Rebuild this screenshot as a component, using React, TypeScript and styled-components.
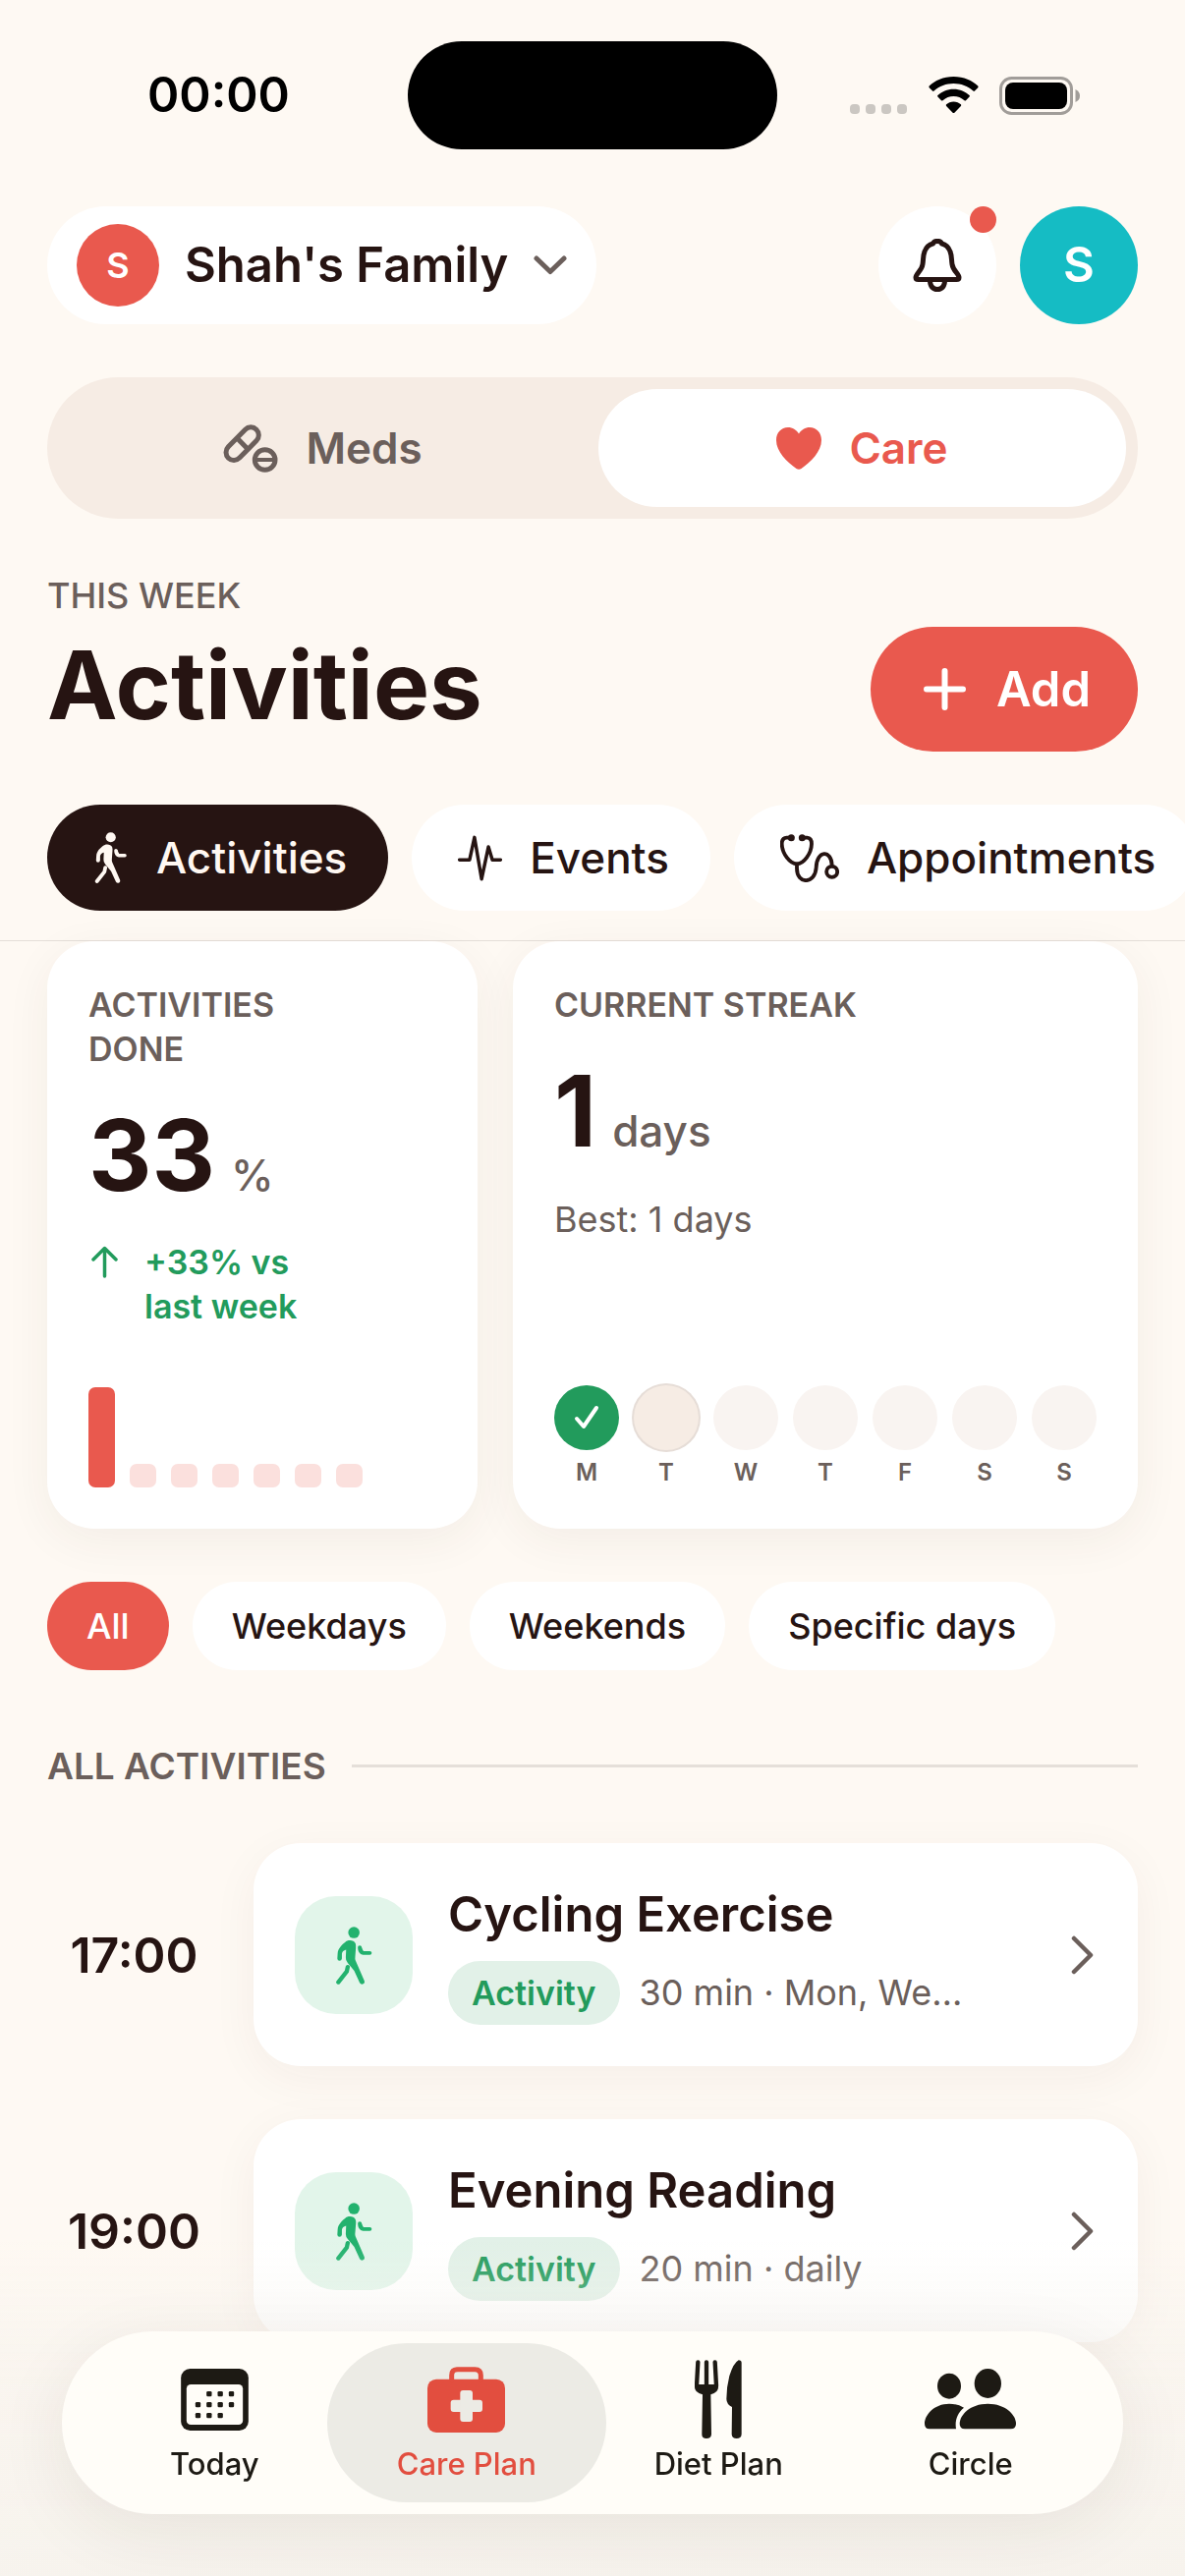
import React from "react";
import styled, { createGlobalStyle } from "styled-components";

const color = {
  page: "#fef9f3",
  ink: "#261412",
  muted: "#6b5f5b",
  coral: "#e9594e",
  teal: "#15bcc4",
  sand: "#f6ece4",
  green: "#229b5c",
  leaf: "#22b26e",
  line: "#e5dfd9",
  navInk: "#1d1a14",
  navRed: "#e24e3f",
  navActive: "#ecebe5",
};

const GlobalStyle = createGlobalStyle`
  * { box-sizing: border-box; }
  body {
    margin: 0;
    background: ${color.page};
    color: ${color.ink};
    font-family: Inter, "Liberation Sans", sans-serif;
  }
  button {
    font: inherit;
    color: inherit;
    border: 0;
    margin: 0;
    padding: 0;
    background: none;
    cursor: pointer;
  }
  h1, h2, h3, p, ul { margin: 0; padding: 0; }
  ul { list-style: none; }
  svg { display: block; flex: none; }
`;

const Screen = styled.div`
  min-height: 100vh;
  padding-bottom: 236px;
  overflow: hidden;
`;

/* ---------- status bar ---------- */

const StatusBar = styled.div`
  display: grid;
  grid-template-columns: 1fr 376px 1fr;
  align-items: center;
  padding-top: 42px;
`;

const Clock = styled.span`
  padding-left: 150px;
  font-size: 49px;
  line-height: 60px;
  font-weight: 600;
  color: #000;
`;

const Island = styled.div`
  height: 110px;
  border-radius: 55px;
  background: #000;
`;

const StatusIcons = styled.div`
  display: flex;
  align-items: center;
  justify-content: flex-end;
  gap: 21px;
  padding-right: 107px;
`;

/* ---------- header ---------- */

const Header = styled.header`
  padding-top: 58px;
  border-bottom: 1px solid ${color.line};
`;

const TopRow = styled.div`
  display: flex;
  justify-content: space-between;
  align-items: center;
  padding: 0 48px;
`;

const FamilyButton = styled.button`
  display: flex;
  align-items: center;
  gap: 26px;
  height: 120px;
  padding: 0 30px;
  border-radius: 60px;
  background: #fff;
  font-size: 49px;
  line-height: 60px;
  font-weight: 600;
`;

const FamilyBadge = styled.span`
  width: 84px;
  height: 84px;
  border-radius: 50%;
  background: ${color.coral};
  color: #fff;
  font-size: 36px;
  line-height: 84px;
  text-align: center;
`;

const TopActions = styled.div`
  display: flex;
  gap: 24px;
`;

const RoundButton = styled.button<{ $bg: string }>`
  position: relative;
  display: grid;
  place-items: center;
  width: 120px;
  height: 120px;
  border-radius: 50%;
  background: ${(p) => p.$bg};
  color: ${(p) => (p.$bg === "#fff" ? color.ink : "#fff")};
  font-size: 49px;
  line-height: 60px;
  font-weight: 600;
`;

const UnreadDot = styled.span`
  position: absolute;
  top: 0;
  right: 0;
  width: 27px;
  height: 27px;
  border-radius: 50%;
  background: ${color.coral};
`;

const Segments = styled.div`
  display: grid;
  grid-template-columns: 1fr 1fr;
  gap: 12px;
  margin: 54px 48px 0;
  padding: 12px;
  border-radius: 72px;
  background: ${color.sand};
`;

const Segment = styled.button<{ $on?: boolean }>`
  display: flex;
  align-items: center;
  justify-content: center;
  gap: 28px;
  height: 120px;
  border-radius: 60px;
  background: ${(p) => (p.$on ? "#fff" : "transparent")};
  color: ${(p) => (p.$on ? color.coral : color.muted)};
  font-size: 44px;
  line-height: 60px;
  font-weight: 600;
`;

const TitleRow = styled.div`
  display: flex;
  justify-content: space-between;
  align-items: flex-end;
  padding: 56px 48px 0;
`;

const TitleBlock = styled.div`
  display: grid;
  gap: 8px;
  padding-bottom: 8px;
`;

const Eyebrow = styled.p`
  font-size: 36px;
  line-height: 45px;
  font-weight: 500;
  color: ${color.muted};
`;

const Title = styled.h1`
  font-size: 96px;
  line-height: 120px;
  font-weight: 700;
`;

const AddButton = styled.button`
  display: flex;
  align-items: center;
  gap: 31px;
  height: 127px;
  padding: 0 48px 0 54px;
  border-radius: 64px;
  background: ${color.coral};
  color: #fff;
  font-size: 49px;
  line-height: 60px;
  font-weight: 600;
`;

const Tabs = styled.nav`
  display: flex;
  gap: 24px;
  padding: 54px 48px 30px;
  overflow-x: auto;
  scrollbar-width: none;
`;

const Tab = styled.button<{ $on?: boolean }>`
  display: flex;
  flex: none;
  align-items: center;
  gap: 28px;
  height: 108px;
  padding: 0 42px 0 47px;
  border-radius: 54px;
  background: ${(p) => (p.$on ? color.ink : "#fff")};
  color: ${(p) => (p.$on ? "#fff8f2" : color.ink)};
  font-size: 44px;
  line-height: 60px;
  font-weight: 500;
`;

/* ---------- summary cards ---------- */

const Summary = styled.section`
  display: grid;
  grid-template-columns: 438fr 636fr;
  gap: 36px;
  padding: 0 48px;
`;

const Card = styled.article`
  display: flex;
  flex-direction: column;
  padding: 42px;
  border-radius: 48px;
  background: #fff;
  box-shadow: 0 12px 48px rgba(70, 45, 30, 0.06);
`;

const CardLabel = styled.h2`
  max-width: 400px;
  font-size: 34px;
  line-height: 45px;
  font-weight: 600;
  color: ${color.muted};
`;

const NarrowLabel = styled(CardLabel)`
  max-width: 250px;
`;

const Figure = styled.p`
  display: flex;
  align-items: baseline;
  gap: 16px;
  margin-top: 26px;
  font-size: 100px;
  line-height: 120px;
  font-weight: 700;
`;

const Unit = styled.span`
  font-size: 44px;
  font-weight: 500;
  line-height: 60px;
  color: ${color.muted};
`;

const Delta = styled.p`
  display: flex;
  gap: 27px;
  max-width: 250px;
  margin: 26px 0 60px;
  font-size: 34px;
  line-height: 45px;
  font-weight: 600;
  color: ${color.green};
  svg { margin: 6px 0 0 3px; }
`;

const Best = styled.p`
  margin-top: 28px;
  font-size: 36px;
  line-height: 45px;
  color: ${color.muted};
`;

const Bars = styled.div`
  display: flex;
  align-items: flex-end;
  gap: 15px;
  height: 102px;
  margin-top: auto;
`;

const Bar = styled.span<{ $full: boolean }>`
  width: 27px;
  height: ${(p) => (p.$full ? "100%" : "24px")};
  border-radius: 7px;
  background: ${(p) => (p.$full ? color.coral : "#fbe0dd")};
`;

const Week = styled.ul`
  display: flex;
  justify-content: space-between;
  margin-top: auto;
`;

const Day = styled.li`
  display: grid;
  justify-items: center;
  gap: 8px;
  width: 66px;
  font-size: 24px;
  line-height: 30px;
  font-weight: 600;
  color: ${color.muted};
`;

const DayMark = styled.span<{ $state: "done" | "today" | "next" }>`
  display: grid;
  place-items: center;
  width: 66px;
  height: 66px;
  border-radius: 50%;
  background: ${(p) =>
    p.$state === "done" ? color.green : p.$state === "today" ? color.sand : "#f9f4f1"};
  box-shadow: ${(p) => (p.$state === "today" ? "0 0 0 2px #e6ddd7" : "none")};
`;

/* ---------- filters ---------- */

const Filters = styled.div`
  display: flex;
  gap: 24px;
  padding: 54px 48px 0;
`;

const Filter = styled.button<{ $on?: boolean }>`
  height: 90px;
  padding: 0 40px;
  border-radius: 45px;
  background: ${(p) => (p.$on ? color.coral : "#fff")};
  color: ${(p) => (p.$on ? "#fff" : color.ink)};
  font-size: 36px;
  line-height: 45px;
  font-weight: 500;
`;

/* ---------- activity list ---------- */

const SectionHead = styled.div`
  display: flex;
  align-items: center;
  gap: 26px;
  padding: 75px 48px 0;
  &::after {
    content: "";
    flex: 1;
    height: 3px;
    background: ${color.line};
  }
`;

const SectionTitle = styled.h2`
  font-size: 37px;
  line-height: 45px;
  font-weight: 600;
  color: ${color.muted};
`;

const List = styled.ul`
  display: grid;
  gap: 54px;
  padding: 56px 48px 0;
`;

const Entry = styled.li`
  display: grid;
  grid-template-columns: 177px 1fr;
  gap: 33px;
  align-items: center;
`;

const Time = styled.time`
  text-align: center;
  font-size: 50px;
  line-height: 60px;
  font-weight: 600;
`;

const EntryCard = styled.button`
  display: flex;
  align-items: center;
  gap: 36px;
  min-width: 0;
  padding: 43px 42px 42px;
  border-radius: 48px;
  background: #fff;
  text-align: left;
  box-shadow: 0 12px 48px rgba(70, 45, 30, 0.05);
`;

const IconTile = styled.span`
  display: grid;
  flex: none;
  place-items: center;
  width: 120px;
  height: 120px;
  border-radius: 42px;
  background: #e2f5ea;
  color: ${color.leaf};
`;

const EntryText = styled.span`
  display: grid;
  flex: 1;
  gap: 17px;
  min-width: 0;
`;

const EntryTitle = styled.span`
  font-size: 49px;
  line-height: 60px;
  font-weight: 600;
`;

const EntryMeta = styled.span`
  display: flex;
  align-items: center;
  gap: 20px;
  font-size: 36px;
  line-height: 45px;
  color: ${color.muted};
`;

const Tag = styled.span`
  padding: 10px 24px;
  border-radius: 33px;
  background: #e2f1e8;
  color: ${color.green};
  font-size: 34px;
  line-height: 45px;
  font-weight: 600;
`;

/* ---------- bottom navigation ---------- */

const Fade = styled.div`
  position: fixed;
  inset: auto 0 0;
  height: 340px;
  pointer-events: none;
  background: linear-gradient(rgba(246, 242, 236, 0), rgba(246, 242, 236, 0.6) 40%, #f7f3ed);
`;

const BottomNav = styled.nav`
  position: fixed;
  inset: auto 63px 63px;
  display: grid;
  grid-template-columns: repeat(4, 1fr);
  padding: 12px 27px;
  border-radius: 93px;
  background: #fffdf8;
  box-shadow: 0 18px 72px rgba(50, 40, 30, 0.08);
`;

const NavItem = styled.button<{ $on?: boolean }>`
  display: flex;
  flex-direction: column;
  align-items: center;
  gap: 8px;
  height: 162px;
  margin: 0 -14px;
  padding-top: 17px;
  border-radius: 81px;
  background: ${(p) => (p.$on ? color.navActive : "transparent")};
  color: ${(p) => (p.$on ? color.navRed : color.navInk)};
  font-size: 31px;
  line-height: 36px;
  font-weight: 500;
`;

const NavIcon = styled.span`
  display: grid;
  place-items: center;
  height: 80px;
`;

/* ---------- drawings ---------- */

const line = {
  fill: "none",
  stroke: "currentColor",
  strokeLinecap: "round" as const,
  strokeLinejoin: "round" as const,
};

const SignalDots = () => (
  <svg width="59" height="39" viewBox="0 0 59 39" fill="#cbc7c2">
    {[0, 16, 32, 48].map((x) => (
      <rect key={x} x={x} y="28" width="10" height="10" rx="4" />
    ))}
  </svg>
);

const Wifi = () => (
  <svg width="51" height="38" viewBox="0 0 51 38">
    <path d="M25.500 0C36 0 44.500 4 50.300 9.600Q51 10.400 50.300 11.200L47 14.600Q46.200 15.300 45.400 14.600C40 9.700 33 7 25.500 7S11 9.700 5.600 14.600Q4.800 15.300 4 14.600L.7 11.200Q0 10.400.7 9.600C6.500 4 15 0 25.500 0Z" />
    <path d="M25.500 12.700C32 12.700 37.500 15.200 41.600 19Q42.400 19.800 41.600 20.600L38 24.200Q37.300 24.900 36.500 24.200C33.400 21.400 29.700 19.900 25.500 19.900S17.600 21.400 14.500 24.200Q13.700 24.900 13 24.200L9.400 20.600Q8.600 19.800 9.400 19C13.500 15.200 19 12.700 25.500 12.700Z" />
    <path d="M25.500 25.500C28.500 25.500 31 26.600 32.900 28.300Q33.700 29.100 32.900 29.900L26.400 36.700Q25.500 37.500 24.600 36.700L18.100 29.900Q17.300 29.100 18.100 28.300C20 26.600 22.500 25.500 25.500 25.500Z" />
  </svg>
);

const Battery = () => (
  <svg width="82" height="39" viewBox="0 0 82 39">
    <rect x="1.500" y="1.500" width="72" height="36" rx="11" fill="none" stroke="#a19d99" strokeWidth="3" />
    <rect x="6" y="6" width="63" height="27" rx="8" />
    <path d="M77.500 13Q82 15 82 19.500T77.500 26Z" fill="#a19d99" />
  </svg>
);

const ChevronDown = () => (
  <svg width="34" height="20" viewBox="0 0 34 20">
    <path d="M3 3 17 16.500 31 3" {...line} stroke={color.muted} strokeWidth="5" />
  </svg>
);

const ChevronRight = () => (
  <svg width="26" height="40" viewBox="0 0 26 40">
    <path d="M3 3 20 20 3 37" {...line} stroke={color.muted} strokeWidth="4.500" />
  </svg>
);

const Bell = () => (
  <svg width="50" height="54" viewBox="0 0 50 54">
    <g {...line} strokeWidth="5">
      <path d="M3 39.500C3 35.500 9 33 10 26C10.800 21 10.300 17 12 13C14 7.500 18 5.500 20.500 5C21.500 1.500 28.500 1.500 29.500 5C32 5.500 36 7.500 38 13C39.700 17 39.200 21 40 26C41 33 47 35.500 47 39.500Q47 41.500 44.500 41.500H5.500Q3 41.500 3 39.500Z" />
      <path d="M17.500 42.500C17.500 48.500 20.500 51.500 25 51.500S32.500 48.500 32.500 42.500" />
    </g>
  </svg>
);

const Pills = () => (
  <svg width="56" height="49" viewBox="88 94 168 147">
    <g {...line} strokeWidth="15">
      <rect x="86" y="129" width="122" height="48" rx="24" transform="rotate(-45.500 147 153)" />
      <path d="M131 136 164 170" strokeLinecap="butt" />
      <circle cx="216" cy="202" r="31" />
      <path d="M188 202H244" strokeLinecap="butt" strokeWidth="12" />
    </g>
  </svg>
);

const Heart = () => (
  <svg width="46" height="43" viewBox="0 0 46 43">
    <path
      d="M23 6.500C25.500 2.500 29.500 0 34 0C41 0 46 5.500 46 13C46 25 35 35 25.500 42Q23 43.600 20.500 42C11 35 0 25 0 13C0 5.500 5 0 12 0C16.500 0 20.500 2.500 23 6.500Z"
      fill="currentColor"
    />
  </svg>
);

const Plus = () => (
  <svg width="43" height="43" viewBox="0 0 43 43">
    <path d="M21.500 3V40M3 21.500H40" {...line} strokeWidth="6" />
  </svg>
);

const Walk = ({ width, height }: { width: number; height: number }) => (
  <svg width={width} height={height} viewBox="0 0 112 178">
    <circle cx="55" cy="18" r="17.500" fill="currentColor" />
    <path
      d="M28 48C35 40 55 40 60 52Q62 58 61 66L59 92Q58 100 60 104L87 166Q90 174 82 177Q76 178 73 173L56 136L36 112Q29 104 30 94L31 71Q19 74 18 84L18 98Q17 105 11 105Q4 105 4 98L5 82C6 66 20 54 28 48Z"
      fill="currentColor"
    />
    <path d="M36 124 33 138 7 171" {...line} strokeWidth="13" />
    <path d="M73 64Q73 79 84 81H104" {...line} strokeWidth="12" />
    <path d="M70 62 78 62 84 76 72 76Z" fill="currentColor" />
  </svg>
);

const Pulse = () => (
  <svg width="45" height="47" viewBox="14 64 136 140">
    <path d="M19 139H50L65 70 87 198 108 99 120 139H145" {...line} strokeWidth="10.500" />
  </svg>
);

const Stethoscope = () => (
  <svg width="60" height="49" viewBox="1002 58 180 147">
    <g {...line} strokeWidth="11.500">
      <path d="M1034 69H1022Q1007 70 1007 88C1008 118 1032 149 1053 149S1097 118 1098 88Q1098 70 1084 69H1070" />
      <path d="M1053 149V163C1053 212 1109 212 1112 160C1114 106 1158 106 1160 152" />
      <circle cx="1160" cy="173" r="16.500" />
    </g>
    <circle cx="1036" cy="69" r="10.500" fill="currentColor" />
    <circle cx="1069" cy="69" r="10.500" fill="currentColor" />
  </svg>
);

const ArrowUp = () => (
  <svg width="27" height="33" viewBox="0 0 27 33">
    <path d="M13.500 31V3M2 14 13.500 2.500 25 14" {...line} strokeWidth="3.500" />
  </svg>
);

const Check = () => (
  <svg width="26" height="26" viewBox="0 0 26 26">
    <path d="M3 14 10 22 23 3" {...line} stroke="#fff" strokeWidth="4" />
  </svg>
);

const calendarDots = [
  [155, 176], [189, 176], [223, 176],
  [121, 209], [155, 209], [189, 209], [223, 209],
  [121, 242], [155, 242], [189, 242],
];

const Calendar = () => (
  <svg width="69" height="63" viewBox="69 99 206 189" fill="currentColor">
    <rect x="69" y="99" width="206" height="189" rx="28" />
    <rect x="86" y="147" width="172" height="123" rx="13" fill="#fffdf8" />
    {calendarDots.map(([x, y]) => (
      <rect key={`${x}-${y}`} x={x - 8} y={y - 8} width="16" height="16" rx="4" />
    ))}
  </svg>
);

const MedicalKit = () => (
  <svg width="79" height="67" viewBox="822 93 237 201" fill="currentColor">
    <rect x="822" y="131" width="237" height="163" rx="27" />
    <path d="M896 134V119Q896 101 914 101H967Q985 101 985 119V134" {...line} strokeWidth="15" />
    <rect x="893" y="194" width="97" height="37" rx="9" fill={color.navActive} />
    <rect x="922" y="165" width="38" height="96" rx="9" fill={color.navActive} />
  </svg>
);

const Cutlery = () => (
  <svg width="48" height="80" viewBox="204 66 144 240" fill="currentColor">
    <path d="M214 73 210 145M240 73V150M266 73 270 145" {...line} strokeWidth="13" />
    <path d="M204 141H276V150Q276 166 253 172L255 293Q254 306 240 306T226 293L228 172Q204 166 204 150Z" />
    <path d="M347 75Q347 67 338 67Q322 76 310 115Q301 150 301 185Q301 201 318 210L317 293Q318 306 332 306T347 293Z" />
  </svg>
);

const People = () => (
  <svg width="93" height="62" viewBox="906 102 279 186" fill="currentColor">
    <ellipse cx="981" cy="155" rx="36" ry="39" />
    <ellipse cx="1099" cy="147" rx="41" ry="45" />
    <path d="M1013 270C1013 243 1045 209 1099 209S1185 243 1185 270Q1185 286 1169 286H1029Q1013 286 1013 270Z" />
    <path d="M906 270C906 243 935 209 981 209Q1006 209 1026 221C1005 238 998 262 1002 286H921Q906 286 906 270Z" />
  </svg>
);

/* ---------- data ---------- */

const week: { day: string; state: "done" | "today" | "next" }[] = [
  { day: "M", state: "done" },
  { day: "T", state: "today" },
  { day: "W", state: "next" },
  { day: "T", state: "next" },
  { day: "F", state: "next" },
  { day: "S", state: "next" },
  { day: "S", state: "next" },
];

const filters = ["All", "Weekdays", "Weekends", "Specific days"];

const entries = [
  { time: "17:00", title: "Cycling Exercise", meta: "30 min · Mon, We…" },
  { time: "19:00", title: "Evening Reading", meta: "20 min · daily" },
];

const destinations = [
  { label: "Today", Icon: Calendar },
  { label: "Care Plan", Icon: MedicalKit },
  { label: "Diet Plan", Icon: Cutlery },
  { label: "Circle", Icon: People },
];

export default function App() {
  return (
    <Screen>
      <GlobalStyle />
      <StatusBar>
        <Clock>00:00</Clock>
        <Island />
        <StatusIcons>
          <SignalDots />
          <Wifi />
          <Battery />
        </StatusIcons>
      </StatusBar>

      <Header>
        <TopRow>
          <FamilyButton>
            <FamilyBadge>S</FamilyBadge>
            Shah's Family
            <ChevronDown />
          </FamilyButton>
          <TopActions>
            <RoundButton $bg="#fff" aria-label="Notifications">
              <Bell />
              <UnreadDot />
            </RoundButton>
            <RoundButton $bg={color.teal}>S</RoundButton>
          </TopActions>
        </TopRow>

        <Segments>
          <Segment>
            <Pills />
            Meds
          </Segment>
          <Segment $on>
            <Heart />
            Care
          </Segment>
        </Segments>

        <TitleRow>
          <TitleBlock>
            <Eyebrow>THIS WEEK</Eyebrow>
            <Title>Activities</Title>
          </TitleBlock>
          <AddButton>
            <Plus />
            Add
          </AddButton>
        </TitleRow>

        <Tabs>
          <Tab $on>
            <Walk width={36} height={52} />
            Activities
          </Tab>
          <Tab>
            <Pulse />
            Events
          </Tab>
          <Tab>
            <Stethoscope />
            Appointments
          </Tab>
        </Tabs>
      </Header>

      <main>
        <Summary>
          <Card>
            <NarrowLabel>ACTIVITIES DONE</NarrowLabel>
            <Figure>
              33<Unit>%</Unit>
            </Figure>
            <Delta>
              <ArrowUp />
              <span>+33% vs last week</span>
            </Delta>
            <Bars>
              {week.map((d, i) => (
                <Bar key={i} $full={d.state === "done"} />
              ))}
            </Bars>
          </Card>
          <Card>
            <CardLabel>CURRENT STREAK</CardLabel>
            <Figure>
              1<Unit>days</Unit>
            </Figure>
            <Best>Best: 1 days</Best>
            <Week>
              {week.map((d, i) => (
                <Day key={i}>
                  <DayMark $state={d.state}>{d.state === "done" && <Check />}</DayMark>
                  {d.day}
                </Day>
              ))}
            </Week>
          </Card>
        </Summary>

        <Filters>
          {filters.map((name, i) => (
            <Filter key={name} $on={i === 0}>
              {name}
            </Filter>
          ))}
        </Filters>

        <SectionHead>
          <SectionTitle>ALL ACTIVITIES</SectionTitle>
        </SectionHead>

        <List>
          {entries.map((entry) => (
            <Entry key={entry.time}>
              <Time>{entry.time}</Time>
              <EntryCard>
                <IconTile>
                  <Walk width={37} height={59} />
                </IconTile>
                <EntryText>
                  <EntryTitle>{entry.title}</EntryTitle>
                  <EntryMeta>
                    <Tag>Activity</Tag>
                    {entry.meta}
                  </EntryMeta>
                </EntryText>
                <ChevronRight />
              </EntryCard>
            </Entry>
          ))}
        </List>
      </main>

      <Fade />
      <BottomNav>
        {destinations.map(({ label, Icon }) => (
          <NavItem key={label} $on={label === "Care Plan"}>
            <NavIcon>
              <Icon />
            </NavIcon>
            {label}
          </NavItem>
        ))}
      </BottomNav>
    </Screen>
  );
}
